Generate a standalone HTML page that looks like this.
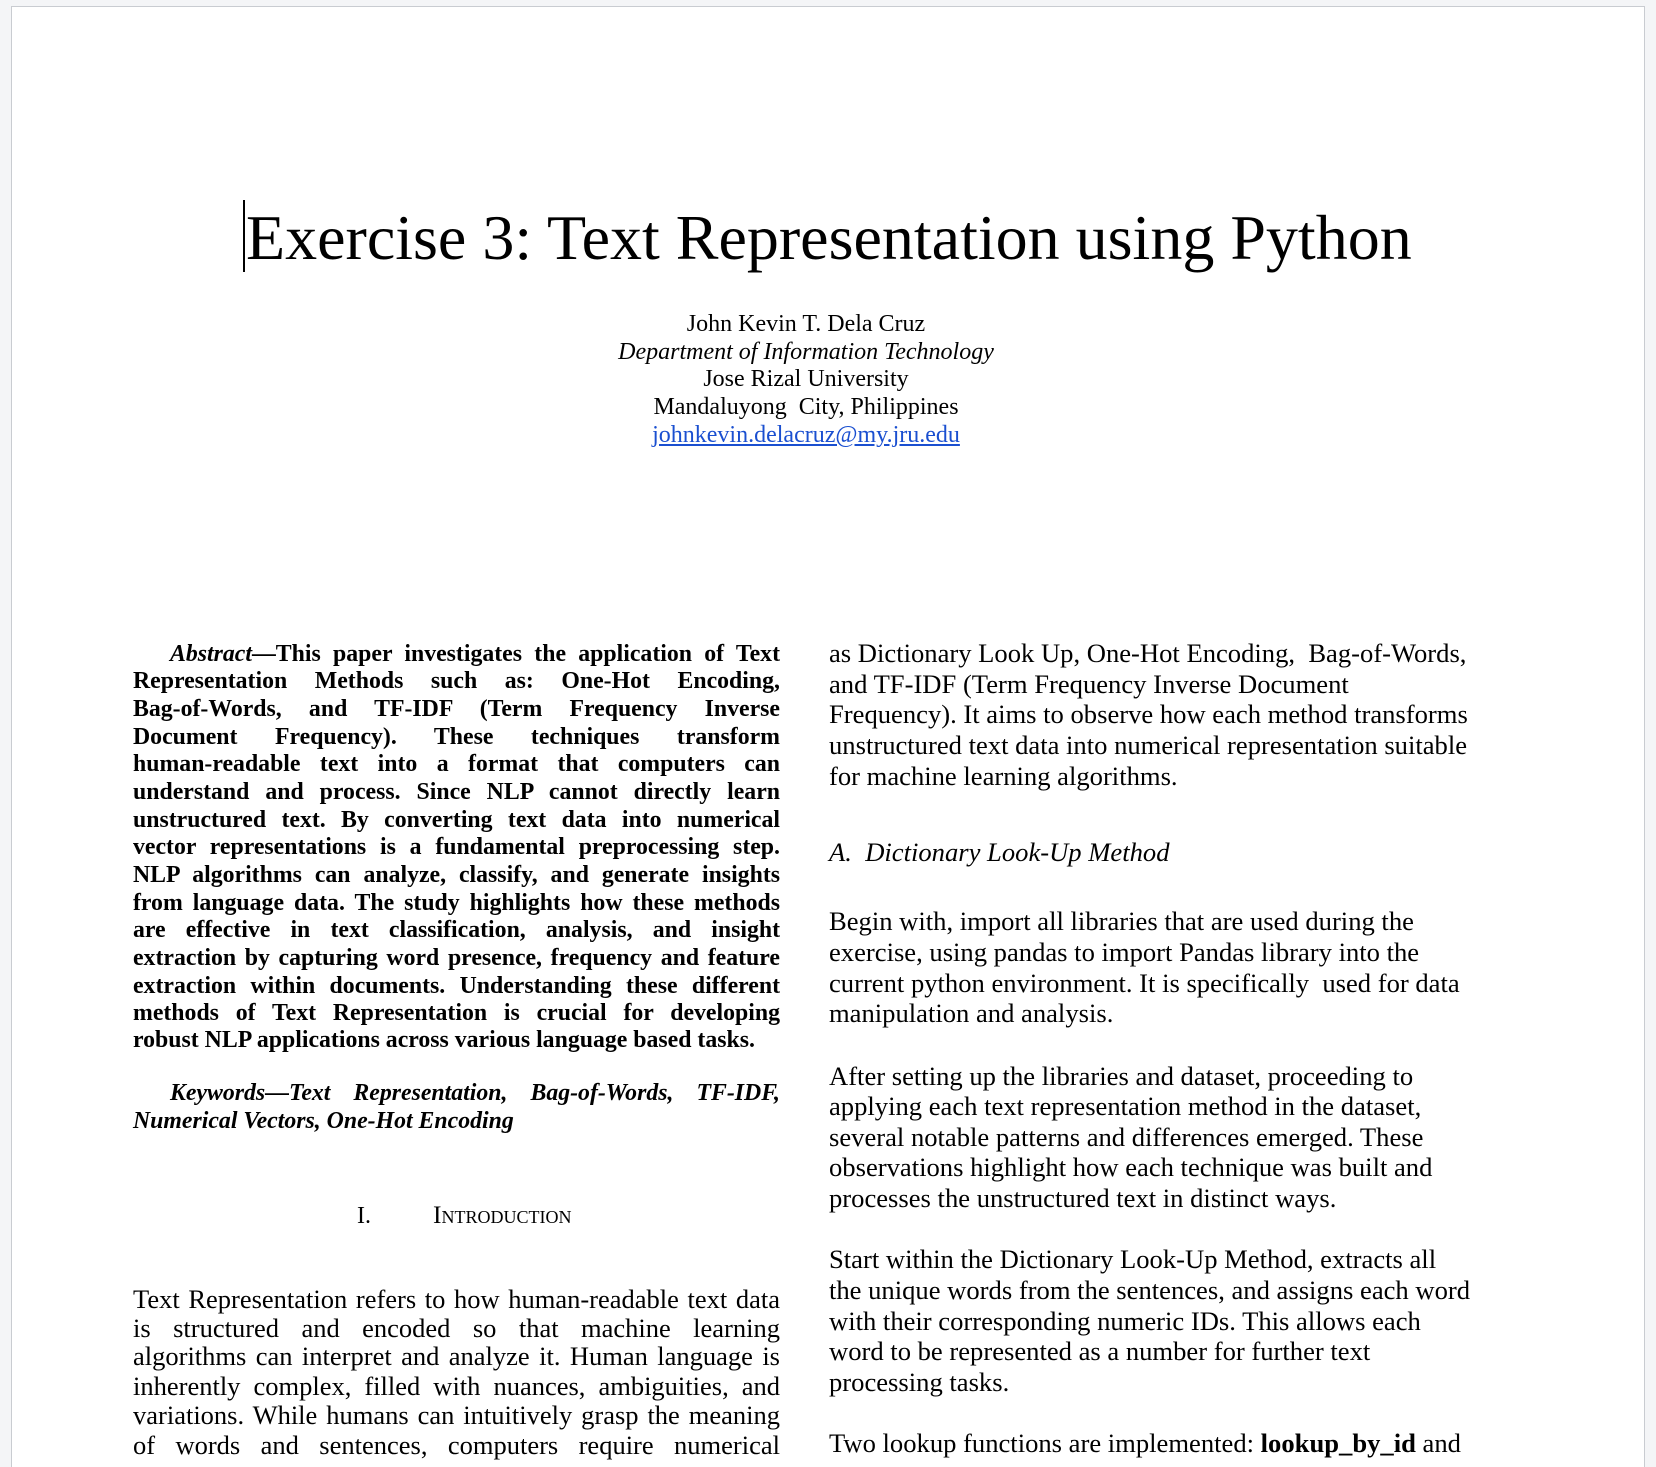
<!DOCTYPE html>
<html><head><meta charset="utf-8"><style>
html,body{margin:0;padding:0;}
body{width:1656px;height:1460px;background:#f4f5f7;position:relative;overflow:hidden;font-family:"Liberation Serif",serif;color:#000;}
#page{position:absolute;left:11px;top:6px;width:1632px;height:1460px;background:#fff;border-left:1px solid #c9ccd1;border-right:1px solid #c9ccd1;border-top:1px solid #c9ccd1;}
.l{position:absolute;white-space:nowrap;}
.j{text-align:justify;text-align-last:justify;white-space:normal;}
.c{text-align:center;}
.ab{font-weight:bold;font-size:23.8px;line-height:22px;left:133px;width:647px;}
.ib{font-size:26.5px;line-height:25px;left:133px;width:647px;}
.r{font-size:26.6px;line-height:25px;left:829px;}
.au{font-size:24px;line-height:24px;left:556px;width:500px;}
</style></head><body>
<div id="page"></div>
<div style="position:absolute;left:243px;top:200px;width:2px;height:72px;background:#000"></div>
<div class="l" style="left:246px;top:205px;font-size:64px;line-height:65px;">Exercise 3: Text Representation using Python</div>

<div class="l c au" style="top:312px">John Kevin T. Dela Cruz</div>
<div class="l c au" style="top:340px;font-style:italic">Department of Information Technology</div>
<div class="l c au" style="top:367px">Jose Rizal University</div>
<div class="l c au" style="top:395px">Mandaluyong&nbsp; City, Philippines</div>
<div class="l c au" style="top:423px;color:#1a4fd0;text-decoration:underline">johnkevin.delacruz@my.jru.edu</div>

<div class="l j ab" style="top:643px;padding-left:37px;width:610px"><i>Abstract</i>—This paper investigates the application of Text</div>
<div class="l j ab" style="top:670px">Representation Methods such as: One-Hot Encoding,</div>
<div class="l j ab" style="top:698px">Bag-of-Words, and TF-IDF (Term Frequency Inverse</div>
<div class="l j ab" style="top:726px">Document Frequency). These techniques transform</div>
<div class="l j ab" style="top:753px">human-readable text into a format that computers can</div>
<div class="l j ab" style="top:781px">understand and process. Since NLP cannot directly learn</div>
<div class="l j ab" style="top:809px">unstructured text. By converting text data into numerical</div>
<div class="l j ab" style="top:836px">vector representations is a fundamental preprocessing step.</div>
<div class="l j ab" style="top:864px">NLP algorithms can analyze, classify, and generate insights</div>
<div class="l j ab" style="top:892px">from language data. The study highlights how these methods</div>
<div class="l j ab" style="top:919px">are effective in text classification, analysis, and insight</div>
<div class="l j ab" style="top:947px">extraction by capturing word presence, frequency and feature</div>
<div class="l j ab" style="top:975px">extraction within documents. Understanding these different</div>
<div class="l j ab" style="top:1002px">methods of Text Representation is crucial for developing</div>
<div class="l ab" style="top:1029px">robust NLP applications across various language based tasks.</div>

<div class="l j ab" style="top:1082px;padding-left:37px;width:610px;font-style:italic">Keywords—Text Representation, Bag-of-Words, TF-IDF,</div>
<div class="l ab" style="top:1110px;font-style:italic">Numerical Vectors, One-Hot Encoding</div>

<div class="l" style="left:357px;top:1204px;font-size:24px;line-height:24px">I.</div>
<div class="l" style="left:433px;top:1203px;font-size:25.5px;line-height:24px;font-variant:small-caps">Introduction</div>

<div class="l j ib" style="top:1287px">Text Representation refers to how human-readable text data</div>
<div class="l j ib" style="top:1316px">is structured and encoded so that machine learning</div>
<div class="l j ib" style="top:1344px">algorithms can interpret and analyze it. Human language is</div>
<div class="l j ib" style="top:1374px">inherently complex, filled with nuances, ambiguities, and</div>
<div class="l j ib" style="top:1403px">variations. While humans can intuitively grasp the meaning</div>
<div class="l j ib" style="top:1433px">of words and sentences, computers require numerical</div>

<div class="l r" style="top:641px">as Dictionary Look Up, One-Hot Encoding,&nbsp; Bag-of-Words,</div>
<div class="l r" style="top:672px">and TF-IDF (Term Frequency Inverse Document</div>
<div class="l r" style="top:702px">Frequency). It aims to observe how each method transforms</div>
<div class="l r" style="top:733px">unstructured text data into numerical representation suitable</div>
<div class="l r" style="top:764px">for machine learning algorithms.</div>

<div class="l r" style="top:840px;font-style:italic">A.&nbsp; Dictionary Look-Up Method</div>

<div class="l r" style="top:909px">Begin with, import all libraries that are used during the</div>
<div class="l r" style="top:940px">exercise, using pandas to import Pandas library into the</div>
<div class="l r" style="top:971px">current python environment. It is specifically&nbsp; used for data</div>
<div class="l r" style="top:1001px">manipulation and analysis.</div>

<div class="l r" style="top:1064px">After setting up the libraries and dataset, proceeding to</div>
<div class="l r" style="top:1094px">applying each text representation method in the dataset,</div>
<div class="l r" style="top:1125px">several notable patterns and differences emerged. These</div>
<div class="l r" style="top:1155px">observations highlight how each technique was built and</div>
<div class="l r" style="top:1186px">processes the unstructured text in distinct ways.</div>

<div class="l r" style="top:1247px">Start within the Dictionary Look-Up Method, extracts all</div>
<div class="l r" style="top:1278px">the unique words from the sentences, and assigns each word</div>
<div class="l r" style="top:1309px">with their corresponding numeric IDs. This allows each</div>
<div class="l r" style="top:1339px">word to be represented as a number for further text</div>
<div class="l r" style="top:1370px">processing tasks.</div>

<div class="l r" style="top:1431px">Two lookup functions are implemented: <b>lookup_by_id</b> and</div>
</body></html>
